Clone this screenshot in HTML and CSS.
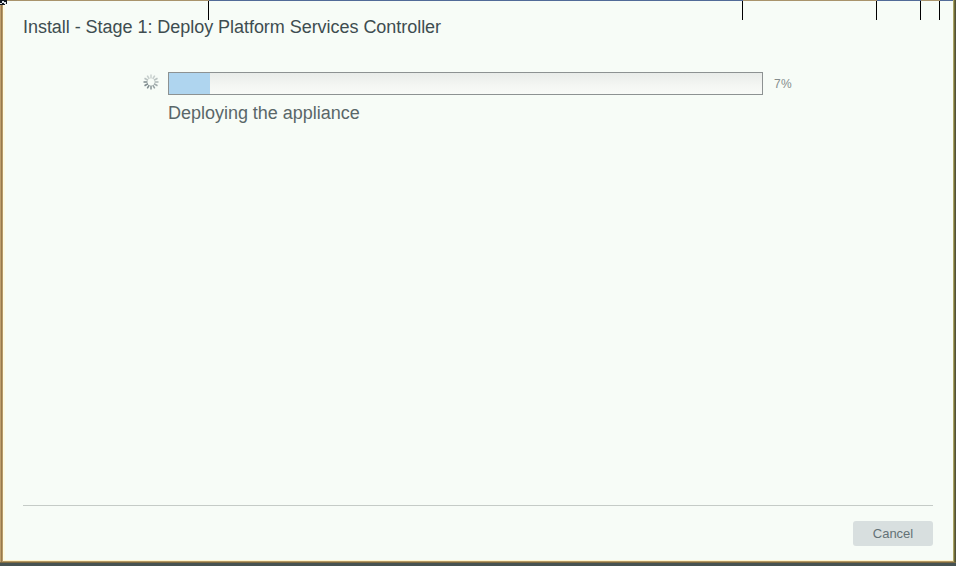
FILE: index.html
```html
<!DOCTYPE html>
<html lang="en">
<head>
<meta charset="utf-8">
<title>Install - Stage 1</title>
<link rel="stylesheet" href="styles.css">
</head>
<body>
<div class="window">
  <div class="ticks"><i></i><i></i><i></i><i></i><i></i><i></i></div>
  <svg class="corner" width="7" height="6" viewBox="0 0 7 6" shape-rendering="crispEdges"><path fill="#111820" d="M0 0h7v4H5v1H0z"/><path fill="#dce2e8" d="M2 1h2v1h2v2H4V3H2zM0 3h2v1H0z"/></svg>
  <main class="panel">
    <h1>Install - Stage 1: Deploy Platform Services Controller</h1>
    <section class="deploy">
      <svg class="spinner" width="16" height="16" viewBox="-8 -8 16 16" stroke-width="1.5">
        <g stroke="#7d8a8d">
          <path d="M-3.5 0H-7.5"/>
          <path d="M-3.5 0H-7.5" transform="rotate(-30)"/>
          <path d="M-3.5 0H-7.5" transform="rotate(-60)"/>
          <path d="M-3.5 0H-7.5" transform="rotate(-90)" opacity=".9"/>
          <path d="M-3.5 0H-7.5" transform="rotate(-120)" opacity=".8"/>
          <path d="M-3.5 0H-7.5" transform="rotate(-150)" opacity=".7"/>
          <path d="M-3.5 0H-7.5" transform="rotate(180)" opacity=".6"/>
          <path d="M-3.5 0H-7.5" transform="rotate(150)" opacity=".5"/>
          <path d="M-3.5 0H-7.5" transform="rotate(120)" opacity=".4"/>
          <path d="M-3.5 0H-7.5" transform="rotate(90)" opacity=".35"/>
          <path d="M-3.5 0H-7.5" transform="rotate(60)" opacity=".4"/>
          <path d="M-3.5 0H-7.5" transform="rotate(30)" opacity=".5"/>
        </g>
      </svg>
      <div class="bar"><div class="fill" style="width:6.93%"></div></div>
      <span class="percent">7%</span>
      <p class="status">Deploying the appliance</p>
    </section>
    <footer><button class="cancel">Cancel</button></footer>
  </main>
</div>
</body>
</html>
```
FILE: styles.css
```css
* { box-sizing: border-box; }
body {
  margin: 0;
  background: #465046;
  font-family: "Liberation Sans", Arial, sans-serif;
}
.window {
  position: relative;
  width: 956px;
  height: 566px;
  padding: 1px 3px 5px 3px;
  background:
    linear-gradient(90deg, #c0a06c 0 1px, #98794e 1px 2px, #b79b68 2px 3px, transparent 3px 953px, #aaa466 953px 954px, #706c39 954px 955px, #525239 955px) 0 0 / 100% 562px no-repeat,
    linear-gradient(#b59862 561px, #b59862 561px 562px, #7c6a42 562px 563px, #465252 563px);
}
.ticks {
  position: absolute;
  inset: 0 0 auto;
  height: 20px;
  display: grid;
  grid-template-columns: 209px 534px 134px 44px 19px 1fr;
}
.ticks i {
  border-top: 1px solid #a9946c;
  background: linear-gradient(#000, #000) right / 1px 100% no-repeat;
}
.ticks i:nth-child(even) { border-top-color: #526b98; }
.ticks i:last-child { background: none; margin-right: 3px; }
.corner { position: absolute; left: 0; top: 0; }
.panel {
  height: 560px;
  padding: 16px 20px 14px 18px;
  display: flex;
  flex-direction: column;
  background: #f7fcf7;
  border-left: 2px solid #fffbe3;
  border-bottom: 1px solid #fff4cc;
}
h1 {
  margin: 0;
  font-size: 18px;
  line-height: 21px;
  font-weight: 400;
  letter-spacing: -.04px;
  color: #3e4d50;
  white-space: nowrap;
}
.deploy {
  margin: 34px 0 0 120px;
  display: grid;
  grid-template-columns: 16px 595px auto;
  column-gap: 9px;
  justify-content: start;
  align-items: center;
}
.spinner { margin-top: -3px; }
.bar {
  height: 23px;
  border: 1px solid #8d9292;
  background: linear-gradient(#e9ece9, #f4f6f3 60%, #f8faf7);
}
.fill { height: 100%; background: #afd5ef; }
.percent {
  margin-left: 2px;
  font-size: 12px;
  letter-spacing: .4px;
  color: #858d8d;
}
.status {
  grid-column: 2;
  margin: 8px 0 0;
  font-size: 18px;
  line-height: 21px;
  letter-spacing: -.02px;
  color: #5a6769;
}
footer {
  margin-top: auto;
  padding-top: 15px;
  border-top: 1px solid #c5cbc7;
  display: flex;
  justify-content: flex-end;
}
.cancel {
  width: 80px;
  height: 25px;
  padding: 0;
  border: 0;
  border-radius: 3px;
  background: #d8dfdf;
  color: #647276;
  font: 13px "Liberation Sans", Arial, sans-serif;
}
```
